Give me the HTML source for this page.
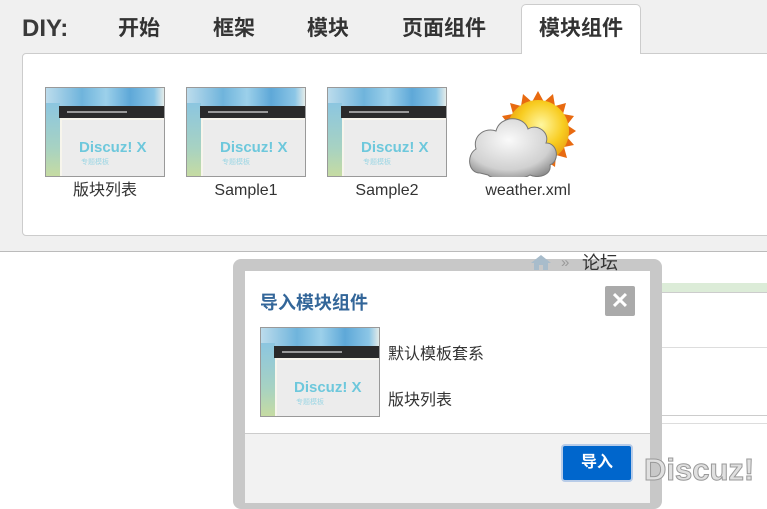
<!DOCTYPE html>
<html><head><meta charset="utf-8"><style>
*{margin:0;padding:0;box-sizing:border-box}
body{width:767px;height:495px;overflow:hidden;position:relative;background:#fff;font-family:"Liberation Sans","Noto Sans CJK SC",sans-serif}
.a{position:absolute}
.top{left:0;top:0;width:767px;height:252px;background:#f0f0f0;border-bottom:1px solid #bbb}
.tab{top:16px;font-size:21px;font-weight:bold;color:#333;line-height:26px}
.thumb{width:120px;height:90px;border:1px solid #999;background:#f7f5ec;overflow:hidden}
.thumb .w{left:0;top:0;width:120px;height:20px;background:linear-gradient(90deg,#bcdcec,#6fb4dc 30%,#9cd0ea 50%,#5ea8d8 70%,#8cc6e6 90%,#f5f3ea)}
.thumb .l{left:0;top:15px;width:14px;height:75px;background:linear-gradient(180deg,#8cc6e0,#a7d2c2 60%,#c8dca0)}
.thumb .b{left:13px;top:18px;width:107px;height:12px;background:#2a2a2a}
.thumb .b i{position:absolute;left:8px;top:5px;width:60px;height:2px;background:#999}
.thumb .g{left:16px;top:32px;width:104px;height:58px;background:#ececec}
.thumb .t{left:33px;top:51px;font-size:15px;font-weight:bold;color:#6ec8dc;white-space:nowrap}
.thumb .s{left:35px;top:69px;font-size:7px;color:#9cd6e4}
.lab{font-size:16px;color:#333;text-align:center;width:120px;top:180px;line-height:22px;height:22px}
</style></head><body>
<div class="a top"></div>
<div class="a" style="left:22px;top:14px;font-size:24px;font-weight:bold;color:#3a3a3a;line-height:30px">DIY:</div>
<div class="a" style="left:521px;top:4px;width:120px;height:50px;background:#fff;border:1px solid #ccc;border-bottom:none;border-radius:5px 5px 0 0;z-index:2"></div>
<div class="a tab" style="left:118px">开始</div>
<div class="a tab" style="left:213px">框架</div>
<div class="a tab" style="left:307px">模块</div>
<div class="a tab" style="left:402px">页面组件</div>
<div class="a tab" style="left:539px;z-index:3">模块组件</div>
<div class="a" style="left:22px;top:53px;width:760px;height:183px;background:#fff;border:1px solid #ccc;border-radius:4px"></div>

<div class="a thumb" style="left:45px;top:87px"><div class="a w"></div><div class="a l"></div><div class="a b"><i></i></div><div class="a g"></div><div class="a t">Discuz! X</div><div class="a s">专题模板</div></div>
<div class="a thumb" style="left:186px;top:87px"><div class="a w"></div><div class="a l"></div><div class="a b"><i></i></div><div class="a g"></div><div class="a t">Discuz! X</div><div class="a s">专题模板</div></div>
<div class="a thumb" style="left:327px;top:87px"><div class="a w"></div><div class="a l"></div><div class="a b"><i></i></div><div class="a g"></div><div class="a t">Discuz! X</div><div class="a s">专题模板</div></div>
<svg class="a" style="left:468px;top:87px" width="120" height="90" viewBox="0 0 120 90">
<defs><radialGradient id="sg" cx="0.55" cy="0.4" r="0.6"><stop offset="0" stop-color="#fff7a0"/><stop offset="0.6" stop-color="#f8cc20"/><stop offset="1" stop-color="#e89a10"/></radialGradient>
<radialGradient id="cg" cx="0.45" cy="0.35" r="0.7"><stop offset="0" stop-color="#fafafa"/><stop offset="0.7" stop-color="#d0d0d0"/><stop offset="1" stop-color="#8a8a8a"/></radialGradient></defs>
<polygon fill="#e86a10" points="70,4 76,15 85,7 87,19 98,16 95,27 106,29 99,38 108,44 99,50 106,58 96,60 99,71 88,68 87,80 77,73 70,84 63,73 53,80 52,68 41,71 44,60 34,58 41,50 32,44 41,38 34,29 45,27 42,16 53,19 55,7 64,15"/>
<circle cx="70" cy="44" r="31" fill="url(#sg)"/>
<path d="M12,86 C0,86 -2,68 8,62 C4,48 18,40 28,44 C32,28 56,28 60,42 C70,36 82,46 78,56 C90,56 92,74 82,78 C84,88 70,92 62,88 C52,94 26,94 20,88 Z" fill="url(#cg)" stroke="#777" stroke-width="1"/>
</svg>
<div class="a lab" style="left:45px">版块列表</div>
<div class="a lab" style="left:186px">Sample1</div>
<div class="a lab" style="left:327px">Sample2</div>
<div class="a lab" style="left:468px">weather.xml</div>

<!-- background page -->
<div class="a" style="left:650px;top:283px;width:117px;height:9px;background:#dcecd8"></div>
<div class="a" style="left:650px;top:292px;width:117px;height:1px;background:#ccc"></div>
<div class="a" style="left:650px;top:347px;width:117px;height:1px;background:#ddd"></div>
<div class="a" style="left:650px;top:415px;width:117px;height:1px;background:#ccc"></div>
<div class="a" style="left:650px;top:423px;width:117px;height:1px;background:#ddd"></div>

<!-- dialog -->
<div class="a" style="left:233px;top:259px;width:429px;height:250px;background:#c8c8c8;border-radius:8px"></div>
<div class="a" style="left:245px;top:271px;width:405px;height:230px;background:#fff"></div>
<div class="a" style="left:245px;top:433px;width:405px;height:70px;background:#f2f2f2;border-top:1px solid #ccc"></div>
<div class="a" style="left:260px;top:289px;font-size:18px;font-weight:bold;color:#336699">导入模块组件</div>
<div class="a" style="left:605px;top:286px;width:30px;height:30px;background:#aaa;border-radius:2px;color:#fff;font-size:22px;font-weight:bold;text-align:center;line-height:30px">✕</div>
<div class="a thumb" style="left:260px;top:327px"><div class="a w"></div><div class="a l"></div><div class="a b"><i></i></div><div class="a g"></div><div class="a t">Discuz! X</div><div class="a s">专题模板</div></div>
<div class="a" style="left:388px;top:340px;font-size:16px;color:#333">默认模板套系</div>
<div class="a" style="left:388px;top:386px;font-size:16px;color:#333">版块列表</div>
<div class="a" style="left:561px;top:444px;width:72px;height:38px;border:2px solid #b8cce8;border-radius:4px;background:#0066cc;color:#fff;font-size:16px;font-weight:bold;text-align:center;line-height:34px">导入</div>

<!-- overlays above dialog -->
<svg class="a" style="left:530px;top:253px;z-index:5" width="22" height="18" viewBox="0 0 22 18"><path d="M11,2 L21,10 L18,10 L18,17 L13,17 L13,12 L9,12 L9,17 L4,17 L4,10 L1,10 Z" fill="#a8bccb"/></svg>
<div class="a" style="left:561px;top:252px;font-size:15px;color:#999;z-index:5;line-height:22px">»</div>
<div class="a" style="left:582px;top:251px;font-size:18px;color:#333;z-index:5;line-height:24px">论坛</div>
<div class="a" style="left:644px;top:452px;font-size:31px;font-weight:bold;color:#e0e0e0;-webkit-text-stroke:1px #999;z-index:5;line-height:36px">Discuz!</div>
</body></html>
